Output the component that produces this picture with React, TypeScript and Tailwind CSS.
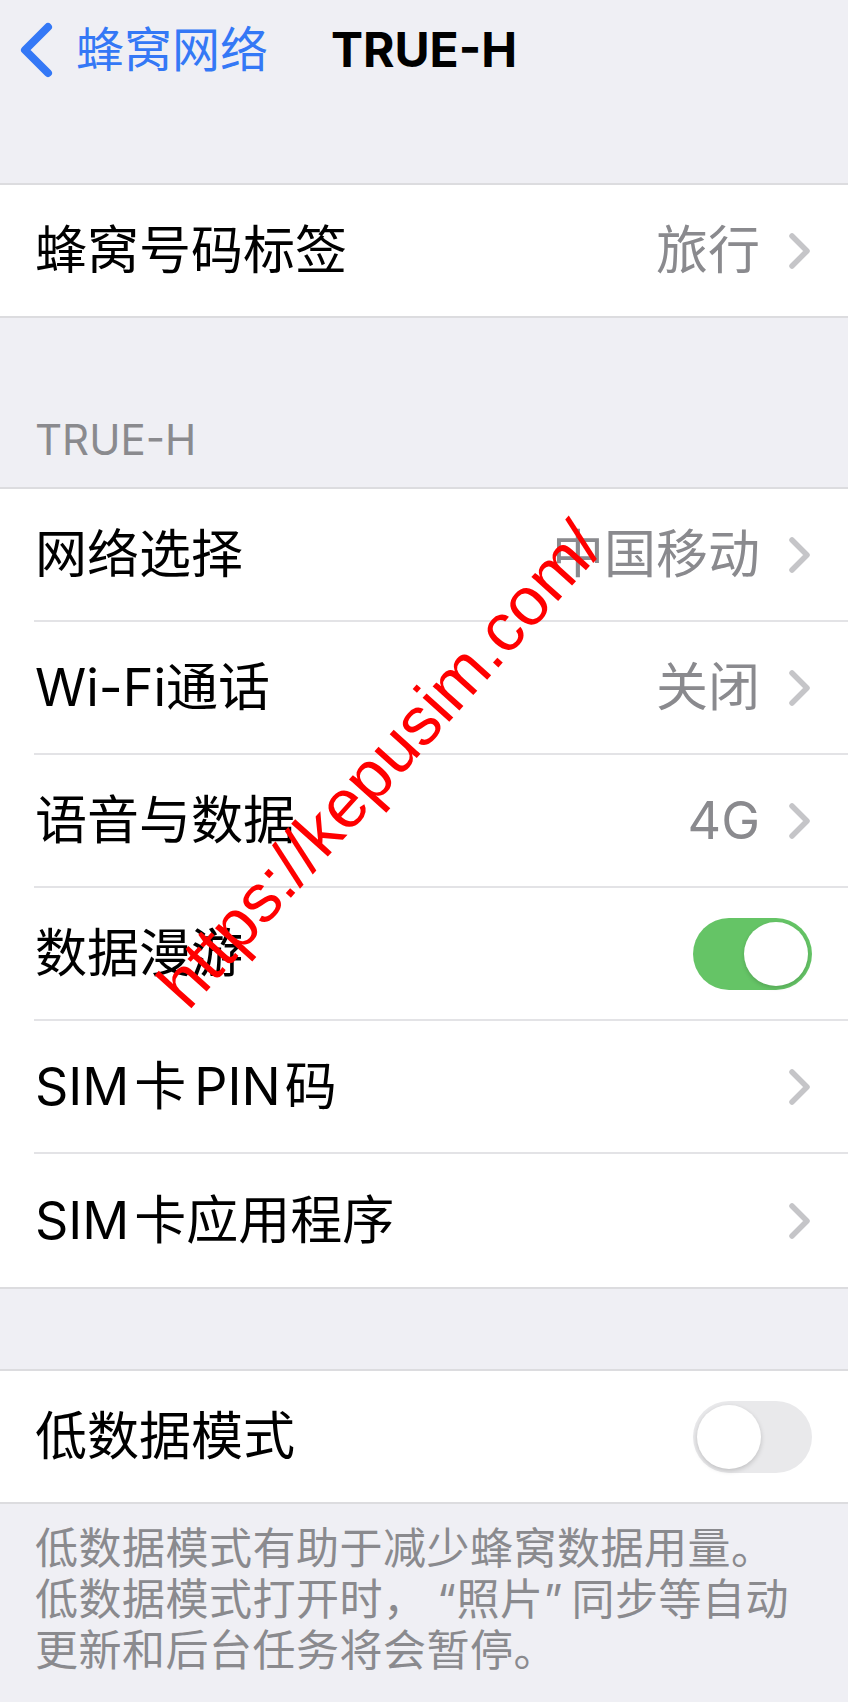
import React from 'react';

const FONT = { fontFamily: 'Inter, "Noto Sans CJK SC", sans-serif' };

const Chevron = () => (
  <svg width="24" height="38" viewBox="0 0 24 38" className="shrink-0">
    <polyline
      points="4,4 19,19 4,34"
      fill="none"
      stroke="#c5c5c8"
      strokeWidth="5.5"
      strokeLinecap="round"
      strokeLinejoin="round"
    />
  </svg>
);

const Toggle = ({ on }: { on: boolean }) =>
  on ? (
    <div className="flex h-[72px] w-[119px] shrink-0 items-center justify-end rounded-full bg-[#65c466] p-[4px]">
      <div className="h-[64px] w-[64px] rounded-full bg-white shadow-[0_2px_4px_rgba(0,0,0,0.15)]" />
    </div>
  ) : (
    <div className="flex h-[72px] w-[119px] shrink-0 items-center justify-start rounded-full bg-[#e9e9eb] p-[4px]">
      <div className="h-[64px] w-[64px] rounded-full bg-white shadow-[0_2px_5px_rgba(0,0,0,0.18)]" />
    </div>
  );

interface RowProps {
  label: React.ReactNode;
  value?: string;
  chevron?: boolean;
  toggle?: boolean;
  last?: boolean;
  tall?: boolean;
}

const Row = ({ label, value, chevron, toggle, last, tall = true }: RowProps) => (
  <div className={`flex bg-white pl-[34px] ${tall ? 'h-[133px]' : 'h-[131px]'}`}>
    <div
      className={`flex flex-1 items-center pr-[36px] ${last ? '' : 'border-b-2 border-[#e3e3e6]'}`}
    >
      <span className="pl-[1px] text-[52px] leading-none text-black">{label}</span>
      <div className="ml-auto flex items-center gap-[28px]">
        {value && <span className="text-[52px] leading-none text-[#8a8a8e]">{value}</span>}
        {chevron && <Chevron />}
        {toggle !== undefined && <Toggle on={toggle} />}
      </div>
    </div>
  </div>
);

const Sim = ({ rest }: { rest: React.ReactNode }) => (
  <>
    SIM<span className="ml-[5px]">卡</span>
    {rest}
  </>
);

export default function App() {
  return (
    <div className="relative min-h-[1702px] w-[848px] overflow-hidden bg-[#efeff4]" style={FONT}>
      {/* nav bar */}
      <div className="relative flex h-[100px] items-center">
        <div className="flex items-center pl-[18px]">
          <svg width="36" height="56" viewBox="0 0 36 56">
            <polyline
              points="30,5 7,28 30,51"
              fill="none"
              stroke="#3478f6"
              strokeWidth="8"
              strokeLinecap="round"
              strokeLinejoin="round"
            />
          </svg>
          <span className="ml-[22px] text-[48px] leading-none text-[#3478f6]">蜂窝网络</span>
        </div>
        <span className="absolute left-1/2 -translate-x-1/2 text-[48px] font-bold leading-none text-black">
          TRUE-H
        </span>
      </div>

      <div className="h-[83px]" />

      <div className="border-y-2 border-[#dcdcdf]">
        <Row label="蜂窝号码标签" value="旅行" chevron last tall={false} />
      </div>

      <div className="flex h-[169px] items-end pb-[26px] pl-[35px]">
        <span className="text-[42px] leading-none text-[#8a8a8e]">TRUE-H</span>
      </div>

      <div className="border-y-2 border-[#dcdcdf]">
        <Row label="网络选择" value="中国移动" chevron />
        <Row label="Wi-Fi通话" value="关闭" chevron />
        <Row label="语音与数据" value="4G" chevron />
        <Row label="数据漫游" toggle={true} />
        <Row
          label={
            <Sim
              rest={
                <>
                  <span className="ml-[8px]">PIN</span>
                  <span className="ml-[4px]">码</span>
                </>
              }
            />
          }
          chevron
        />
        <Row label={<Sim rest={<span>应用程序</span>} />} chevron last />
      </div>

      <div className="h-[80px]" />

      <div className="border-y-2 border-[#dcdcdf]">
        <Row label="低数据模式" toggle={false} last tall={false} />
      </div>

      <p className="whitespace-nowrap px-[35px] pt-[19px] text-[43px] leading-[51px] tracking-[0.5px] text-[#8a8a8e]">
        低数据模式有助于减少蜂窝数据用量。
        <br />
        低数据模式打开时，
        <span className="inline-block w-[30px] text-right">“</span>
        照片
        <span className="inline-block w-[28px] text-left">”</span>
        同步等自动
        <br />
        更新和后台任务将会暂停。
      </p>

      {/* watermark */}
      <div
        className="pointer-events-none absolute left-[379px] top-[764px] -translate-x-1/2 -translate-y-1/2 -rotate-[48deg] whitespace-nowrap text-[68px] leading-none text-[#ff0000]"
        style={{ fontFamily: '"Liberation Sans", Arial, sans-serif' }}
      >
        https://kepusim.com/
      </div>
    </div>
  );
}
